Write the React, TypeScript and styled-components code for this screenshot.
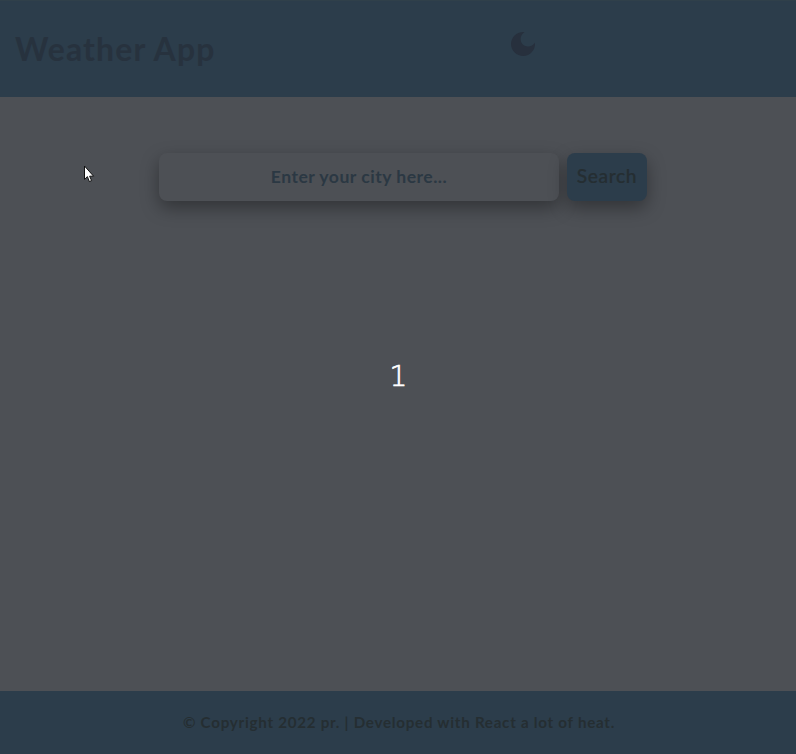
import React from "react";
import styled, { createGlobalStyle } from "styled-components";

const GlobalStyle = createGlobalStyle`
  * { box-sizing: border-box; }
  body { margin: 0; background: #4d5055; font-family: Lato, "Open Sans", sans-serif; }
`;

const Page = styled.div`
  position: relative;
  display: flex;
  flex-direction: column;
  height: 754px;
  overflow: hidden;
`;

const Header = styled.header`
  display: flex;
  align-items: center;
  justify-content: space-between;
  height: 97px;
  padding: 0 260px 0 15px;
  background: #2c3d4b;
  border-top: 1px solid #30404a;
`;

const Title = styled.h1`
  margin: 0;
  color: #27323e;
  font-size: 32px;
  line-height: 40px;
  font-weight: 700;
  letter-spacing: 1.1px;
  white-space: nowrap;
`;

const ThemeButton = styled.button`
  display: flex;
  margin: 0 0 11px;
  padding: 0;
  border: 0;
  background: none;
  color: #27303d;
`;

const Main = styled.main`
  flex: 1;
  padding: 56px 0 0 159px;
`;

const SearchForm = styled.form`
  display: flex;
  gap: 8px;
`;

const CityInput = styled.input`
  width: 400px;
  height: 48px;
  padding: 0 0 2px;
  border: 0;
  border-radius: 8px;
  background: #4d5055;
  box-shadow: 0 7px 18px rgba(0, 0, 0, 0.35);
  font: 700 17.6px Lato, "Open Sans", sans-serif;
  letter-spacing: 0.48px;
  text-align: center;
  &::placeholder { color: #2b3843; opacity: 1; }
`;

const SearchButton = styled.button`
  width: 80px;
  height: 48px;
  padding: 0 0 3px;
  border: 0;
  border-radius: 8px;
  background: #2c3d4b;
  color: #252e32;
  box-shadow: 0 7px 18px rgba(0, 0, 0, 0.35);
  font: 500 19.2px Lato, "Open Sans", sans-serif;
  letter-spacing: 0.6px;
  -webkit-text-stroke: 0.2px #252e32;
`;

const Footer = styled.footer`
  display: flex;
  align-items: center;
  justify-content: center;
  height: 63px;
  padding: 0 0 2px 2px;
  background: #2c3d4b;
  color: #252e32;
  font-size: 15.2px;
  font-weight: 700;
  letter-spacing: 0.72px;
  white-space: nowrap;
`;

const Countdown = styled.div`
  position: absolute;
  left: 1px;
  right: 0;
  top: 360px;
  color: #fff;
  font: 28px/33px "DejaVu Sans Light", "DejaVu Sans", sans-serif;
  font-weight: 200;
  -webkit-text-stroke: 0.7px #fff;
  text-align: center;
  pointer-events: none;
`;

const Cursor = styled.svg`
  position: absolute;
  left: 84px;
  top: 165px;
  pointer-events: none;
`;

export default function App() {
  return (
    <Page>
      <GlobalStyle />
      <Header>
        <Title>Weather App</Title>
        <ThemeButton aria-label="Toggle theme">
          <svg width="26" height="26" viewBox="0 0 26 26" fill="currentColor">
            <path d="M14.5 1C8 5.5 10.3 15.4 18 15.5C20.8 15.5 23.3 14.1 25 11.8C25.7 18.9 20.2 25 13.2 25C6.6 25 1 19.8 1 13C1 5.9 7.2.2 14.5 1Z" />
          </svg>
        </ThemeButton>
      </Header>
      <Main>
        <SearchForm onSubmit={(e) => e.preventDefault()}>
          <CityInput placeholder="Enter your city here..." />
          <SearchButton>Search</SearchButton>
        </SearchForm>
      </Main>
      <Footer>© Copyright 2022 pr. | Developed with React a lot of heat.</Footer>
      <Countdown>1</Countdown>
      <Cursor width="12" height="19" viewBox="0 0 12 19">
        <path d="M.5 1v13.4l2.9-2.8 1.9 4.9 2.3-.9-2-4.4h4Z" fill="#fff" stroke="#111" />
      </Cursor>
    </Page>
  );
}
